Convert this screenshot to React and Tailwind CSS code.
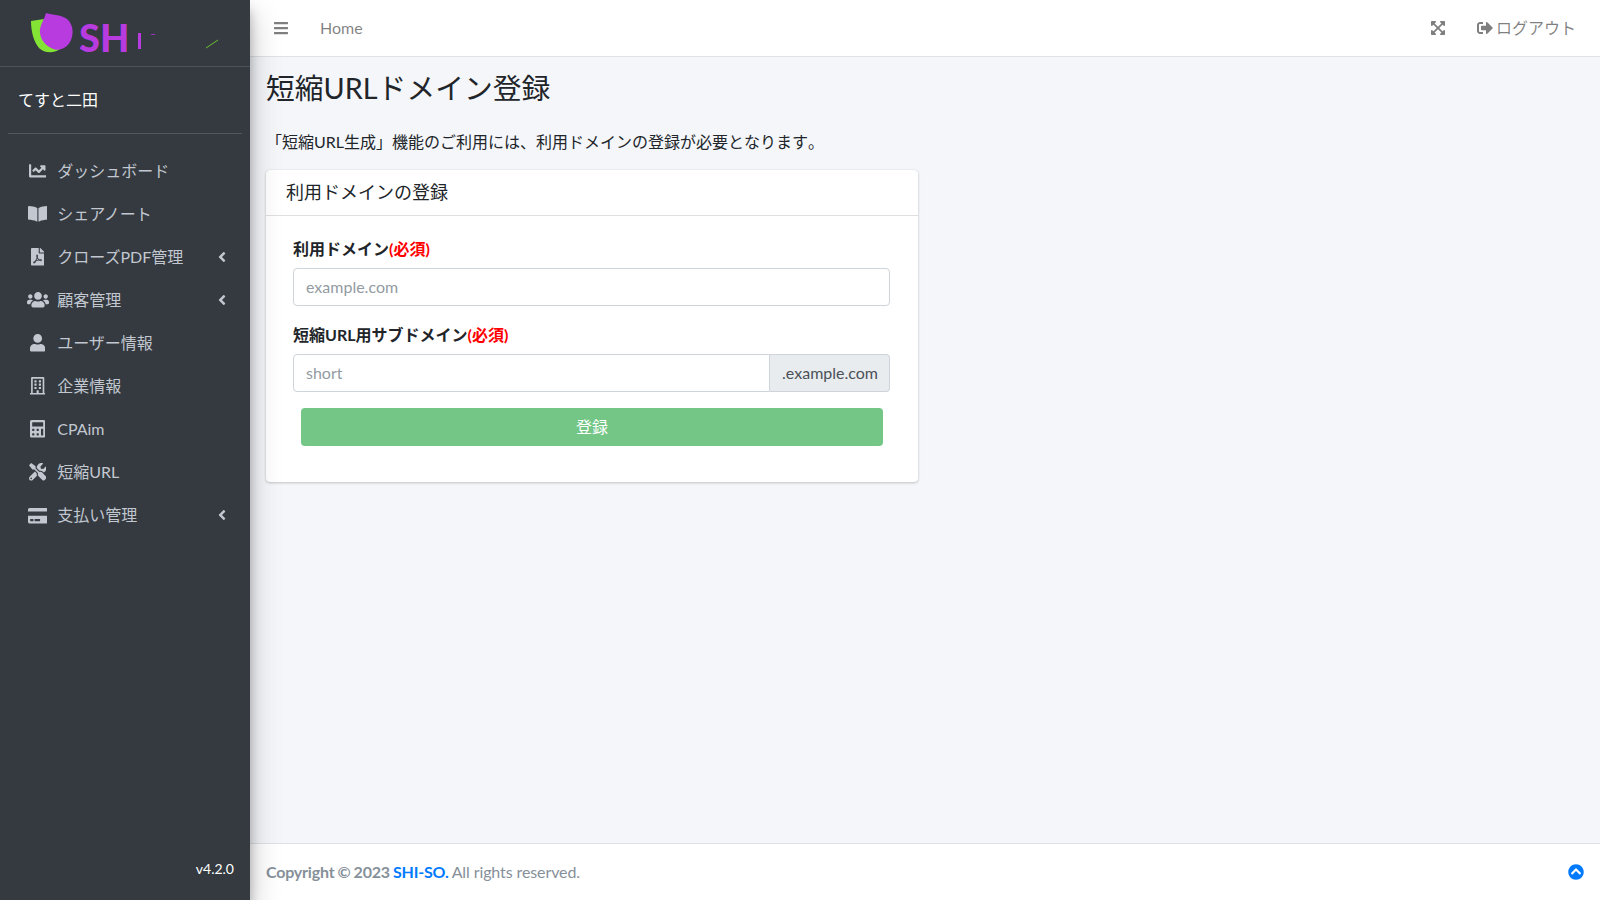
import React from "react";
import {
  FaChartLine, FaBookOpen, FaFilePdf, FaUsers, FaUser, FaRegBuilding, FaCalculator,
  FaTools, FaCreditCard, FaAngleLeft, FaBars, FaExpandArrowsAlt, FaSignOutAlt, FaChevronCircleUp,
} from "react-icons/fa";

const nav = [
  { icon: FaChartLine, size: "w-[17.6px] h-[17.6px]", label: "ダッシュボード" },
  { icon: FaBookOpen, size: "w-[19.8px] h-[17.6px]", label: "シェアノート" },
  { icon: FaFilePdf, size: "w-[13.2px] h-[17.6px]", label: "クローズPDF管理", arrow: true },
  { icon: FaUsers, size: "w-[22px] h-[17.6px]", label: "顧客管理", arrow: true },
  { icon: FaUser, size: "w-[15.4px] h-[17.6px]", label: "ユーザー情報" },
  { icon: FaRegBuilding, size: "w-[15.4px] h-[17.6px]", label: "企業情報" },
  { icon: FaCalculator, size: "w-[15.4px] h-[17.6px]", label: "CPAim" },
  { icon: FaTools, size: "w-[17.6px] h-[17.6px]", label: "短縮URL" },
  { icon: FaCreditCard, size: "w-[19.8px] h-[17.6px]", label: "支払い管理", arrow: true },
];

function Logo() {
  return (
    <div className="flex items-center h-[67px] border-b border-[#4b545c] shrink-0 pl-[31px] relative">
      <svg width="44" height="42" viewBox="0 0 44 42" className="mt-[-1px] shrink-0">
        <path d="M0 9 L13 7 L10 20 C10 29 17 37 29 37 C22 42 13 41 8 36 C3 30 0 20 0 9 Z" fill="#84e436" />
        <path d="M15 1 C22 3 31 3 36 7 C42 12 43 21 40 28 C36 37 27 40 20 36 C12 32 8 24 9 17 C10 11 14 6 15 1 Z" fill="#b83be0" />
      </svg>
      <span className="text-[38px] leading-none font-black text-[#b83be0] font-['Lato',sans-serif] ml-[4px] mt-[7px]">SH</span>
      <svg width="90" height="36" viewBox="0 0 90 36" className="absolute left-[130px] top-[16px]">
        <rect x="8" y="17" width="3" height="16" fill="#b83be0" />
        <rect x="21" y="18" width="4" height="1" fill="#9a35bd" />
        <path d="M76 32 L88 24" stroke="#6cc22e" strokeWidth="1" />
      </svg>
    </div>
  );
}

function NavItem({ icon: Icon, size, label, arrow }) {
  return (
    <li className="h-[43.1px] flex items-center pl-[16px] pr-[16px] text-[#c2c7d0]">
      <span className="w-[25.6px] ml-[0.8px] flex justify-center shrink-0">
        <Icon className={size} />
      </span>
      <span className="ml-[6.8px] whitespace-nowrap">{label}</span>
      {arrow && <FaAngleLeft className="ml-auto w-[8px] h-[16px]" />}
    </li>
  );
}

export default function App() {
  return (
    <div className="flex h-[900px] w-[1600px] overflow-hidden bg-[#f4f6f9] text-[16px] leading-[1.5] text-[#212529] [text-spacing-trim:space-all] font-['Lato','Noto_Sans_CJK_JP',sans-serif]">
      <aside className="relative z-10 w-[250px] shrink-0 flex flex-col bg-[#343a40] shadow-[0_14px_28px_rgba(0,0,0,0.25),0_10px_10px_rgba(0,0,0,0.22)]">
        <Logo />
        <div className="mx-[8px] h-[67px] shrink-0 border-b border-[#4f5962] flex items-center pl-[10px] text-white">
          てすと二田
        </div>
        <ul className="px-[8px] mt-[15px]">
          {nav.map((n) => (
            <NavItem key={n.label} {...n} />
          ))}
        </ul>
        <div className="mt-auto pr-[16px] pb-[21px] text-right text-white text-[14px]">v4.2.0</div>
      </aside>

      <div className="flex-1 flex flex-col min-w-0">
        <header className="h-[57px] shrink-0 bg-white border-b border-[#dee2e6] flex items-center text-[#00000080]">
          <FaBars className="ml-[24px] w-[14px] h-[16px]" />
          <span className="ml-[32px]">Home</span>
          <FaExpandArrowsAlt className="ml-auto w-[14px] h-[16px]" />
          <span className="ml-[32px] mr-[24px] flex items-center whitespace-nowrap">
            <FaSignOutAlt className="w-[16px] h-[16px] mr-[3px]" />
            ログアウト
          </span>
        </header>

        <main className="flex-1 px-[16px]">
          <h1 className="text-[28.8px] leading-[1.2] font-normal mt-[14px] [font-kerning:none]">短縮URLドメイン登録</h1>
          <p className="mt-[24px] [font-kerning:none]">「短縮URL生成」機能のご利用には、利用ドメインの登録が必要となります。</p>
          <section className="mt-[16px] w-[652px] bg-white rounded-[4px] shadow-[0_0_1px_rgba(0,0,0,0.125),0_1px_3px_rgba(0,0,0,0.2)]">
            <div className="h-[46px] border-b border-[#00000020] px-[20px] flex items-center text-[18px]">利用ドメインの登録</div>
            <div className="pl-[27px] pr-[28px] pt-[21px] pb-[36px]">
              <label className="block font-bold mb-[7px]">
                利用ドメイン<span className="text-[#ff0000]">(必須)</span>
              </label>
              <input
                placeholder="example.com"
                className="block w-full h-[38px] px-[12px] border border-[#ced4da] rounded-[4px] bg-white placeholder:text-[#939ba2] outline-none"
              />
              <label className="block font-bold mt-[17px] mb-[7px]">
                短縮URL用サブドメイン<span className="text-[#ff0000]">(必須)</span>
              </label>
              <div className="flex h-[38px]">
                <input
                  placeholder="short"
                  className="flex-1 min-w-0 px-[12px] border border-[#ced4da] rounded-l-[4px] bg-white placeholder:text-[#939ba2] outline-none"
                />
                <span className="flex items-center pl-[12px] pr-[11px] border border-l-0 border-[#ced4da] rounded-r-[4px] bg-[#e9ecef] text-[#495057]">.example.com</span>
              </div>
              <div className="mt-[16px] ml-[8px] mr-[7px] h-[38px] bg-[#73c686] rounded-[4px] flex items-center justify-center text-white">登録</div>
            </div>
          </section>
        </main>

        <footer className="h-[57px] shrink-0 bg-white border-t border-[#dee2e6] flex items-center px-[16px] text-[#869099]">
          <strong className="tracking-[-0.2px] [word-spacing:-0.6px]">Copyright © 2023 <span className="text-[#007bff]">SHI-SO.</span></strong>
          <span className="ml-[3px] tracking-[-0.1px]">All rights reserved.</span>
          <FaChevronCircleUp className="ml-auto text-[#007bff] w-[16px] h-[16px]" />
        </footer>
      </div>
    </div>
  );
}
